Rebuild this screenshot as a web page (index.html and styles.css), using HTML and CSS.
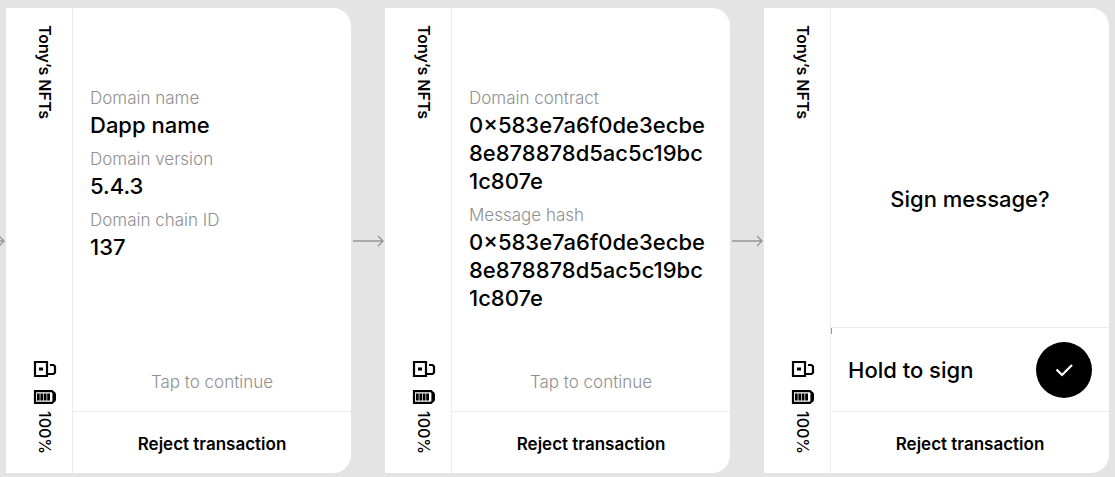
FILE: index.html
```
<!DOCTYPE html>
<html lang="en">
<head>
<meta charset="utf-8">
<title>Sign message flow</title>
<link rel="stylesheet" href="styles.css">
</head>
<body>
<svg class="symbols" aria-hidden="true">
  <symbol id="lock" viewBox="0 0 24 18">
    <path d="M2 2H14V16H2Z M17 5H20.5L22 6.5V12.5L20.5 14H15" fill="none" stroke="#000" stroke-width="2.2"/>
    <path d="M6 7.5H10V10.5H6Z"/>
  </symbol>
  <symbol id="battery" viewBox="0 0 24 14">
    <path d="M2 1.1H19L20.5 2.5V11.5L19 12.9H2Z" fill="none" stroke="#000" stroke-width="2.2"/>
    <path d="M21 2H22L23 4V10L22 12H21Z M4 3.5H6.7V10.5H4Z M7.4 3.5H10.1V10.5H7.4Z M10.8 3.5H13.5V10.5H10.8Z M14.2 3.5H17V10.5H14.2Z"/>
  </symbol>
  <symbol id="arrow" viewBox="0 0 34 12">
    <path d="M2 6H32 M27 1L32 6L27 11" fill="none" stroke="#979797" stroke-width="1.4"/>
  </symbol>
</svg>
<main class="flow">
  <div class="link link-cut"><svg class="arrow"><use href="#arrow"/></svg></div>
  <section class="card">
    <aside class="side">
      <h2 class="wallet">Tony’s NFTs</h2>
      <div class="status">
        <svg class="lock"><use href="#lock"/></svg>
        <svg class="battery"><use href="#battery"/></svg>
        <span class="charge">100%</span>
      </div>
    </aside>
    <div class="main">
      <dl class="fields">
        <dt>Domain name</dt><dd>Dapp name</dd>
        <dt>Domain version</dt><dd>5.4.3</dd>
        <dt>Domain chain ID</dt><dd>137</dd>
      </dl>
      <button class="tap" type="button">Tap to continue</button>
      <button class="reject" type="button">Reject transaction</button>
    </div>
  </section>
  <div class="link"><svg class="arrow"><use href="#arrow"/></svg></div>
  <section class="card">
    <aside class="side">
      <h2 class="wallet">Tony’s NFTs</h2>
      <div class="status">
        <svg class="lock"><use href="#lock"/></svg>
        <svg class="battery"><use href="#battery"/></svg>
        <span class="charge">100%</span>
      </div>
    </aside>
    <div class="main">
      <dl class="fields">
        <dt>Domain contract</dt><dd>0×583e7a6f0de3ecbe<wbr>8e878878d5ac5c19bc<wbr>1c807e</dd>
        <dt>Message hash</dt><dd>0×583e7a6f0de3ecbe<wbr>8e878878d5ac5c19bc<wbr>1c807e</dd>
      </dl>
      <button class="tap" type="button">Tap to continue</button>
      <button class="reject" type="button">Reject transaction</button>
    </div>
  </section>
  <div class="link"><svg class="arrow"><use href="#arrow"/></svg></div>
  <section class="card">
    <aside class="side">
      <h2 class="wallet">Tony’s NFTs</h2>
      <div class="status">
        <svg class="lock"><use href="#lock"/></svg>
        <svg class="battery"><use href="#battery"/></svg>
        <span class="charge">100%</span>
      </div>
    </aside>
    <div class="main">
      <p class="question">Sign message?</p>
      <button class="hold" type="button">
        <span>Hold to sign</span>
        <span class="check"><svg class="tick" viewBox="0 0 18 14"><path d="M1.5 6.5L7 12L17 2" fill="none" stroke="#fff" stroke-width="2.2"/></svg></span>
      </button>
      <button class="reject" type="button">Reject transaction</button>
    </div>
  </section>
</main>
</body>
</html>
```
FILE: styles.css
```
* { box-sizing: border-box; }

body {
  margin: 0;
  background: #e4e4e4;
  color: #000;
  font-family: Inter, "Liberation Sans", sans-serif;
}

button {
  margin: 0;
  padding: 0;
  border: 0;
  background: none;
  color: inherit;
  font: inherit;
}

.symbols { display: none; }

.flow {
  display: flex;
  min-height: 100vh;
  padding: 8px 6px 4px 0;
}

.link {
  display: flex;
  flex: none;
  align-items: center;
  justify-content: flex-end;
  width: 34px;
}

.link-cut {
  width: 6px;
  overflow: hidden;
}

.arrow {
  flex: none;
  width: 34px;
  height: 12px;
}

.card {
  display: flex;
  flex: 1 1 0;
  min-width: 0;
  background: #fff;
  border-radius: 0 18px 18px 0;
}

.side {
  display: flex;
  flex: none;
  flex-direction: column;
  align-items: center;
  justify-content: space-between;
  width: 67px;
  padding: 17px 0 19px 12px;
  border-right: 1px solid #ececec;
}

.wallet,
.charge {
  margin: 0;
  writing-mode: vertical-rl;
  font-size: 16px;
  line-height: 24px;
}

.wallet { font-weight: 600; }
.charge { font-weight: 500; }

.status {
  display: flex;
  flex-direction: column;
  align-items: center;
}

.lock {
  width: 24px;
  height: 18px;
  margin-bottom: 12px;
}

.battery {
  width: 24px;
  height: 14px;
  margin-bottom: 7px;
}

.main {
  display: flex;
  flex: 1;
  flex-direction: column;
  min-width: 0;
}

.fields {
  flex: 1;
  margin: 0;
  padding: 78px 17px 0;
}

.fields dt {
  margin-bottom: 1px;
  color: #8f8f8f;
  font-size: 17px;
  font-weight: 300;
  line-height: 24px;
}

.fields dd {
  margin: 0 0 8px;
  font-size: 22px;
  font-weight: 500;
  line-height: 28px;
}

.tap {
  padding: 0 0 17px;
  color: #8f8f8f;
  font-size: 17px;
  font-weight: 300;
  line-height: 24px;
}

.reject {
  height: 62px;
  padding-top: 2px;
  border-top: 1px solid #ececec;
  font-size: 17px;
  font-weight: 600;
}

.question {
  display: flex;
  flex: 1;
  align-items: center;
  justify-content: center;
  margin: 0;
  padding-top: 62px;
  font-size: 22px;
  font-weight: 500;
}

.hold {
  position: relative;
  display: flex;
  align-items: center;
  justify-content: space-between;
  height: 84px;
  padding: 0 17px;
  border-top: 1px solid #ececec;
  font-size: 22px;
  font-weight: 500;
}

.hold::before {
  content: "";
  position: absolute;
  top: 0;
  left: 0;
  width: 1px;
  height: 6px;
  background: #979797;
}

.check {
  display: flex;
  align-items: center;
  justify-content: center;
  width: 56px;
  height: 56px;
  border-radius: 50%;
  background: #000;
}

.tick {
  width: 18px;
  height: 14px;
}
```
